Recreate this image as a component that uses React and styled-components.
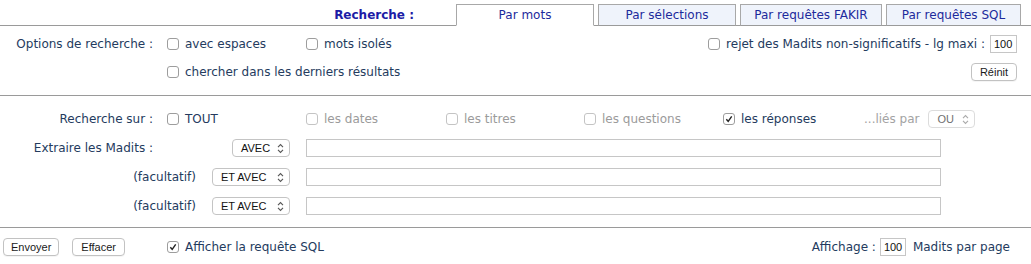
import React from 'react'
import styled, { createGlobalStyle } from 'styled-components'

const GlobalStyle = createGlobalStyle`
	body {
		margin: 0;
		background: #fff;
		font-family: Verdana, "DejaVu Sans", sans-serif;
		font-size: 12px;
		color: #243b5e;
	}
	* { box-sizing: border-box; }
`

const Page = styled.div`
	width: 1031px;
	height: 264px;
`

/* tab header */

const TabBar = styled.div`
	display: flex;
	align-items: flex-end;
	justify-content: flex-end;
	height: 26px;
	padding-right: 10px;
	border-bottom: 1px solid #9a9a9a;
`

const Title = styled.div`
	align-self: center;
	margin: 4px 38px 0 0;
	font-weight: bold;
	color: #1c1ca6;
`

const Tab = styled.div`
	width: ${({ width }) => width}px;
	height: 22px;
	margin-left: 4px;
	margin-bottom: -1px;
	display: flex;
	align-items: center;
	justify-content: center;
	border: 1px solid #a8a8a8;
	border-bottom-color: ${({ active }) => (active ? '#fff' : '#9a9a9a')};
	background: ${({ active }) => (active ? '#fff' : '#eff3fb')};
	color: #1d2a9c;
`

/* sections */

const Section = styled.div`
	display: flex;
	flex-direction: column;
	gap: ${({ gap }) => gap}px;
	padding: ${({ pad }) => pad};
	border-bottom: ${({ last }) => (last ? 'none' : '1px solid #9a9a9a')};
`

const Row = styled.div`
	display: flex;
	align-items: center;
	height: ${({ h }) => h || 18}px;
`

const Label = styled.div`
	flex: 0 0 ${({ w }) => w || 167}px;
	padding-right: ${({ w }) => (w ? 0 : 14)}px;
	text-align: right;
	white-space: nowrap;
	margin-right: ${({ push }) => (push ? 'auto' : '0')};
`

const Cell = styled.div`
	flex: 0 0 ${({ w }) => w || 139}px;
	display: flex;
	align-items: center;
`

const Right = styled.div`
	margin-left: auto;
	display: flex;
	align-items: center;
	gap: ${({ gap }) => gap || 5}px;
	white-space: nowrap;
`

const Check = styled.label`
	display: inline-flex;
	align-items: center;
	gap: 6px;
	white-space: nowrap;
	color: ${({ disabled }) => (disabled ? '#9b9b9b' : 'inherit')};
`

const Box = styled.span`
	width: 12px;
	height: 12px;
	border: 1px solid ${({ disabled }) => (disabled ? '#c4c4c4' : '#9d9d9d')};
	border-radius: 3px;
	background: #fff;
	display: inline-flex;
	align-items: center;
	justify-content: center;
`

const Muted = styled.span`
	color: #a3a3a3;
	margin-right: 9px;
`

const NumInput = styled.div`
	width: ${({ w }) => w || 27}px;
	height: 18px;
	border: 1px solid #c6c6c6;
	padding: 0 3px;
	display: flex;
	align-items: center;
	font: 11px "Liberation Sans", Arial, sans-serif;
	color: #111;
`

const TextInput = styled.div`
	width: 635px;
	height: 18px;
	margin-left: 16px;
	border: 1px solid #c6c6c6;
	background: #fff;
`

const Button = styled.button`
	height: 18px;
	padding: 0 ${({ pad }) => pad || 8}px;
	border: 1px solid #c2c2c2;
	border-radius: 4px;
	background: #fff;
	box-shadow: 0 1px 0 rgba(0, 0, 0, 0.04);
	font: 11px "Liberation Sans", Arial, sans-serif;
	color: #1a1a1a;
	line-height: 16px;
`

const SelectBox = styled.div`
	width: ${({ w }) => w}px;
	height: 18px;
	padding: 0 5px 0 8px;
	border: 1px solid ${({ disabled }) => (disabled ? '#dcdcdc' : '#c4c4c4')};
	border-radius: 4px;
	background: #fff;
	display: flex;
	align-items: center;
	justify-content: space-between;
	font: 11px "Liberation Sans", Arial, sans-serif;
	color: ${({ disabled }) => (disabled ? '#6f6f6f' : '#111')};
`

const Lead = styled.div`
	flex: 0 0 290px;
	display: flex;
	align-items: center;
	justify-content: flex-end;
	gap: 16px;
`

const Buttons = styled.div`
	flex: 0 0 167px;
	display: flex;
	gap: 13px;
	padding-left: 3px;
`

const PerPage = styled.span`
	margin-left: 3px;
`

const Chevrons = ({ color = '#555' }) => (
	<svg width="7" height="11" viewBox="0 0 7 11">
		<path d="M1 4.2 L3.5 1.6 L6 4.2 M1 6.8 L3.5 9.4 L6 6.8" fill="none" stroke={color} strokeWidth="1.1" />
	</svg>
)

const Select = ({ value, w, disabled }) => (
	<SelectBox w={w} disabled={disabled}>
		<span>{value}</span>
		<Chevrons color={disabled ? '#aaa' : '#555'} />
	</SelectBox>
)

const Checkbox = ({ children, checked, disabled }) => (
	<Check disabled={disabled}>
		<Box disabled={disabled}>
			{checked && (
				<svg width="8" height="8" viewBox="0 0 8 8">
					<path d="M1.3 4.3 L3.2 6.3 L6.7 1.4" fill="none" stroke="#222" strokeWidth="1.4" />
				</svg>
			)}
		</Box>
		{children}
	</Check>
)

const tabs = [
	{ label: 'Par mots', width: 138, active: true },
	{ label: 'Par sélections', width: 138 },
	{ label: 'Par requêtes FAKIR', width: 142 },
	{ label: 'Par requêtes SQL', width: 135 },
]

const App = () => (
	<Page>
		<GlobalStyle />
		<TabBar>
			<Title>Recherche :</Title>
			{tabs.map((t) => (
				<Tab key={t.label} width={t.width} active={t.active}>
					{t.label}
				</Tab>
			))}
		</TabBar>

		<Section gap={8} pad="8px 14px 13px 0">
			<Row h={20}>
				<Label>Options de recherche :</Label>
				<Cell>
					<Checkbox>avec espaces</Checkbox>
				</Cell>
				<Cell>
					<Checkbox>mots isolés</Checkbox>
				</Cell>
				<Right>
					<Checkbox>rejet des Madits non-significatifs - lg maxi :</Checkbox>
					<NumInput>100</NumInput>
				</Right>
			</Row>
			<Row h={20}>
				<Label />
				<Checkbox>chercher dans les derniers résultats</Checkbox>
				<Right>
					<Button>Réinit</Button>
				</Right>
			</Row>
		</Section>

		<Section gap={11} pad="14px 0 12px">
			<Row>
				<Label>Recherche sur :</Label>
				<Cell>
					<Checkbox>TOUT</Checkbox>
				</Cell>
				<Cell w={140}>
					<Checkbox disabled>les dates</Checkbox>
				</Cell>
				<Cell w={138}>
					<Checkbox disabled>les titres</Checkbox>
				</Cell>
				<Cell>
					<Checkbox disabled>les questions</Checkbox>
				</Cell>
				<Cell w={141}>
					<Checkbox checked>les réponses</Checkbox>
				</Cell>
				<Cell w={160}>
					<Muted>...liés par</Muted>
					<Select value="OU" w={47} disabled />
				</Cell>
			</Row>
			<Row>
				<Lead>
					<Label w={153} push>
						Extraire les Madits :
					</Label>
					<Select value="AVEC" w={58} />
				</Lead>
				<TextInput />
			</Row>
			{[0, 1].map((i) => (
				<Row key={i}>
					<Lead>
						<span>(facultatif)</span>
						<Select value="ET AVEC" w={78} />
					</Lead>
					<TextInput />
				</Row>
			))}
		</Section>

		<Section gap={0} pad="10px 21px 0 0" last>
			<Row>
				<Buttons>
					<Button pad={7}>Envoyer</Button>
					<Button pad={8}>Effacer</Button>
				</Buttons>
				<Checkbox checked>Afficher la requête SQL</Checkbox>
				<Right gap={4}>
					<span>Affichage :</span>
					<NumInput w={26}>100</NumInput>
					<PerPage>Madits par page</PerPage>
				</Right>
			</Row>
		</Section>
	</Page>
)

export default App
